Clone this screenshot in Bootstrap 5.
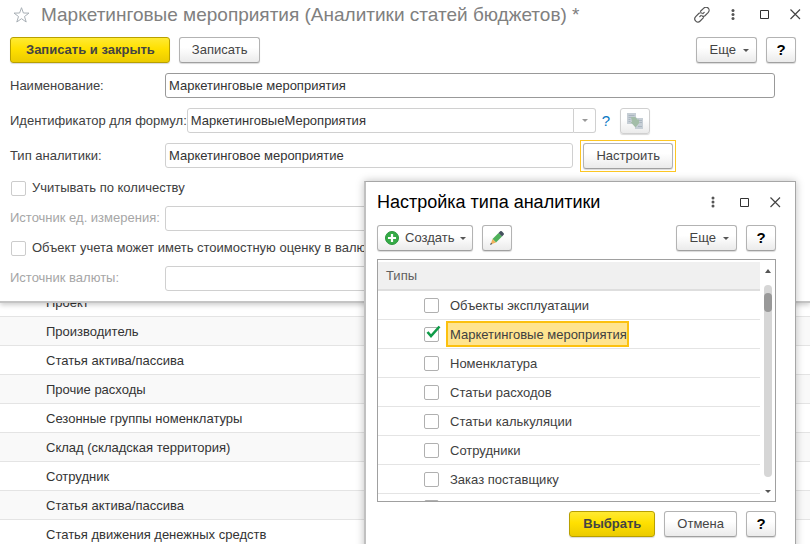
<!DOCTYPE html>
<html lang="ru">
<head>
<meta charset="utf-8">
<meta name="viewport" content="width=device-width, initial-scale=1">
<title>Маркетинговые мероприятия (Аналитики статей бюджетов)</title>
<link href="https://cdn.jsdelivr.net/npm/bootstrap@5.3.0/dist/css/bootstrap.min.css" rel="stylesheet">
<style>
  body { font-family: "Liberation Sans", Arial, sans-serif; font-size: 13px; line-height: 16px; color: #404040; background: #fff; }
  .page { height: 100vh; }
  .form-window { z-index: 1; padding: 0 7px 8px 10px; border-bottom: 2px solid #c4c4c4; box-shadow: 0 2px 5px rgba(0,0,0,.2); }
  .title-bar { height: 30px; padding-left: 3px; }
  .title-text { font-size: 19px; line-height: 22px; color: #808080; white-space: nowrap; }
  .dialog-title { font-size: 18px; line-height: 22px; color: #000; }
  .win-icon { width: 16px; height: 16px; border: 0; padding: 0; background: none; display: block; }
  .win-icons { gap: 15px; }
  .win-icon svg, .btn svg { display: block; }
  .btn-line { gap: 9px; }
  .tool-bar { margin: 7px 7px 5px 0; }
  .btn { --bs-btn-font-size: 13px; --bs-btn-line-height: 16px; --bs-btn-padding-y: 4px; --bs-btn-padding-x: 12px; --bs-btn-border-radius: 3px; height: 26px; white-space: nowrap; }
  .btn-plain { --bs-btn-color: #444; --bs-btn-hover-color: #222; --bs-btn-border-color: #b3b3b3; --bs-btn-hover-border-color: #999; border-bottom-color: #a0a0a0; background: linear-gradient(#fff 40%, #ebebeb); box-shadow: 0 1px 1px rgba(0,0,0,.15); }
  .btn-main { --bs-btn-padding-x: 13px; --bs-btn-color: #444; --bs-btn-hover-color: #222; --bs-btn-border-color: #b8a000; --bs-btn-hover-border-color: #998500; background: linear-gradient(#ffea33, #ffe000 45%, #ebcb00); font-weight: bold; box-shadow: 0 1px 1px rgba(0,0,0,.15); }
  .btn-save { padding-left: 15px; padding-right: 14px; }
  .btn-more { display: flex; align-items: center; gap: 7px; padding-left: 13px; padding-right: 7px; }
  .btn-create { display: flex; align-items: center; gap: 6px; padding-left: 7px; padding-right: 6px; }
  .btn-square { width: 30px; padding: 0; display: flex; align-items: center; justify-content: center; }
  .btn-help { color: #000; font-size: 15px; font-weight: bold; }
  .btn-faded { border-color: #d0d0d0; }
  .caret { display: inline-block; border: 3px solid transparent; border-top-color: #555; border-bottom: 0; }
  .caret-up { border-top: 0; border-bottom: 4px solid #555; }
  .line-tall { height: 35px; padding-right: 28px; }
  .line-low { height: 30px; padding-right: 28px; }
  .cap { width: 155px; flex: none; white-space: nowrap; }
  .cap-auto { white-space: nowrap; }
  .cap-off { color: #a6a6a6; }
  .field { height: 25px; min-width: 0; padding: 0 3px; font-size: 13px; color: #333; border: 1px solid #d0d0d0; border-radius: 3px; box-shadow: none; background: #fff; }
  .field:disabled { background: #fff; }
  .field-active { border-color: #999; }
  .drop { width: 22px; height: 25px; padding: 0; border: 1px solid #d0d0d0; border-left: 0; border-radius: 0 3px 3px 0; background: #fff; display: flex; align-items: center; justify-content: center; }
  .drop .caret { border-top-color: #999; }
  .hint { width: 24px; text-align: center; color: #0a79c4; font-size: 15px; text-decoration: none; padding-right: 4px; }
  .focus-frame { border: 1px solid #fcc624; padding: 2px; margin-left: 7px; margin-right: 99px; }
  .tail-copy { margin-right: 125px; }
  .tail-field { margin-right: 201px; }
  .tick { width: 15px; height: 15px; margin: 0; flex: none; border: 1px solid #b0b0b0; float: none; }
  .form-check-input.tick[type=checkbox] { border-radius: 2px; box-shadow: none; }
  .tick-line { padding-left: 1px; gap: 6px; }
  .tick-line .tick { border-color: #ccc; }
  .tick-line label { white-space: nowrap; }
  .back-list, .types-table { border-collapse: separate; border-spacing: 0; }
  .back-list { margin-top: -15px; margin-bottom: 0; }
  .back-list td { height: 29px; padding: 2px 0 0 46px; border-bottom: 1px solid #e4e4e4; color: #333; vertical-align: middle; }
  .back-list tr:nth-child(even) td { background: #f9f9f9; }
  .dialog-window { position: absolute; z-index: 2; left: 364px; right: 14px; top: 181px; padding: 0 12px 20px 11px; border: 1px solid #a6a6a6; border-left: 2px solid #c0c0c0; background: #fff; box-shadow: 0 0 8px rgba(0,0,0,.25); }
  .dialog-head { height: 43px; padding-bottom: 3px; }
  .dialog-body { margin-right: 7px; }
  .types-box { height: 243px; margin-top: 8px; border: 1px solid #a0a0a0; padding-top: 2px; }
  .types-table { margin: 0; }
  .types-table th { height: 29px; padding: 0 0 0 8px; font-weight: normal; color: #606060; background: #f0f0f0; border-bottom: 2px solid #dedede; vertical-align: middle; }
  .types-table td { height: 29px; padding: 0 0 0 46px; border-bottom: 1px solid #e4e4e4; vertical-align: middle; }
  .type-name { height: 26px; padding: 4px 0 2px 2px; border: 2px solid transparent; color: #404040; }
  .type-picked { background: #ffe48f; border-color: #fcc10f; }
  .form-check-input.tick-done:checked { background-color: #fff; border-color: #b0b0b0; background-image: none; }
  .tick-wrap { position: relative; display: flex; margin-right: 7px; }
  .tick-wrap svg { position: absolute; left: 2px; top: -2px; pointer-events: none; }
  .types-table tr:last-child td { vertical-align: top; padding-top: 6px; }
  .scroll-col { width: 15px; flex: none; padding: 7px 0 8px; }
  .scroll-track { width: 8px; flex: 1; margin: 12px 0 13px; padding-top: 8px; border-radius: 4px; background: #d6d6d6; }
  .scroll-thumb { height: 19px; border-radius: 4px; background: #999; }
  .dialog-foot { margin-top: 9px; }
</style>
<script src="https://cdn.jsdelivr.net/npm/bootstrap@5.3.0/dist/js/bootstrap.bundle.min.js"></script>
</head>
<body>
<div class="page position-relative overflow-hidden">
  <main class="form-window position-relative bg-white">
    <header class="title-bar d-flex align-items-center">
      <button class="win-icon me-2" type="button" aria-label="В избранное">
        <svg width="18" height="17" viewBox="0 0 18 17" fill="none" stroke="#a9b0b6" stroke-width="1"><path d="M8.500 .700 10.400 6 16 6.100 11.500 9.500 13.200 15 8.500 11.700 3.800 15 5.500 9.500 1 6.100 6.600 6Z"/></svg>
      </button>
      <h1 class="title-text m-0 ms-1 fw-normal flex-grow-1">Маркетинговые мероприятия (Аналитики статей бюджетов) *</h1>
      <div class="win-icons d-flex">
        <button class="win-icon" type="button" aria-label="Ссылка">
          <svg width="16" height="16" viewBox="0 0 16 16" fill="none" stroke="#555" stroke-width="1.200" stroke-linecap="round"><path d="M6.500 4.300 9.800 1.200A2.900 2.900 0 0 1 14.300 5.300L11 8.700Q9.600 9.800 8.200 8.900M9.500 10.700 6.200 14A2.900 2.900 0 0 1 1.700 9.700L5 6.300Q6.400 5.300 7.800 6.100M5.800 9.700 7.100 8.400M8.900 6.600 10.200 5.300"/></svg>
        </button>
        <button class="win-icon" type="button" aria-label="Меню">
          <svg width="16" height="16" viewBox="0 0 16 16" fill="#555"><circle cx="8" cy="3.500" r="1.500"/><circle cx="8" cy="7.500" r="1.500"/><circle cx="8" cy="11.500" r="1.500"/></svg>
        </button>
        <button class="win-icon" type="button" aria-label="Развернуть">
          <svg width="16" height="16" viewBox="0 0 16 16" fill="none" stroke="#333"><path d="M4.500 3.500h8v8h-8z"/></svg>
        </button>
        <button class="win-icon" type="button" aria-label="Закрыть">
          <svg width="16" height="16" viewBox="0 0 16 16" fill="none" stroke="#444" stroke-width="1.200"><path d="M3.500 2.500l9.500 9.500M13 2.500 3.500 12"/></svg>
        </button>
      </div>
    </header>

    <div class="tool-bar btn-line d-flex align-items-center">
      <button class="btn btn-main btn-save" type="button">Записать и закрыть</button>
      <button class="btn btn-plain" type="button">Записать</button>
      <button class="btn btn-plain btn-more ms-auto" type="button">Еще <span class="caret"></span></button>
      <button class="btn btn-plain btn-square btn-help" type="button">?</button>
    </div>

    <div class="line-tall d-flex align-items-center">
      <label class="cap" for="f-name">Наименование:</label>
      <input class="field field-active flex-grow-1" id="f-name" type="text" value="Маркетинговые мероприятия">
    </div>
    <div class="line-tall d-flex align-items-center">
      <label class="cap-auto" for="f-ident">Идентификатор для формул:</label>
      <input class="field flex-grow-1 rounded-end-0" id="f-ident" type="text" value="МаркетинговыеМероприятия">
      <button class="drop" type="button" aria-label="Выбрать"><span class="caret"></span></button>
      <a class="hint" href="#">?</a>
      <button class="btn btn-plain btn-square btn-faded tail-copy" type="button" aria-label="Заполнить">
        <svg width="18" height="18" viewBox="0 0 18 18"><path fill="#c6ced5" d="M1 1h9v11H1z"/><path fill="#c6ced5" d="M9 6h8v11H9z"/><path stroke="#aab6c0" fill="none" d="M2.500 3.500h6M2.500 5.500h3M2.500 7.500h2M2.500 9.500h2M13 8.500h3M14 10.500h2M12 14.500h4"/><path fill="#a3bda8" d="M5 5h4q2 0 2 2.500h2V10h1l-4.500 5.500L4.500 10H6z"/></svg>
      </button>
    </div>
    <div class="line-tall d-flex align-items-center">
      <label class="cap" for="f-type">Тип аналитики:</label>
      <input class="field flex-grow-1" id="f-type" type="text" value="Маркетинговое мероприятие">
      <div class="focus-frame"><button class="btn btn-plain" type="button">Настроить</button></div>
    </div>
    <div class="line-low tick-line d-flex align-items-center">
      <input class="form-check-input tick" id="c-qty" type="checkbox"><label for="c-qty">Учитывать по количеству</label>
    </div>
    <div class="line-low d-flex align-items-center">
      <label class="cap cap-off" for="f-unit">Источник ед. измерения:</label>
      <input class="field flex-grow-1 tail-field" id="f-unit" type="text" disabled>
    </div>
    <div class="line-low tick-line d-flex align-items-center">
      <input class="form-check-input tick" id="c-cur" type="checkbox"><label for="c-cur">Объект учета может иметь стоимостную оценку в валюте</label>
    </div>
    <div class="line-low d-flex align-items-center">
      <label class="cap cap-off" for="f-cur">Источник валюты:</label>
      <input class="field flex-grow-1 tail-field" id="f-cur" type="text" disabled>
    </div>
  </main>

  <table class="back-list table table-borderless">
    <tbody>
      <tr><td>Проект</td></tr>
      <tr><td>Производитель</td></tr>
      <tr><td>Статья актива/пассива</td></tr>
      <tr><td>Прочие расходы</td></tr>
      <tr><td>Сезонные группы номенклатуры</td></tr>
      <tr><td>Склад (складская территория)</td></tr>
      <tr><td>Сотрудник</td></tr>
      <tr><td>Статья актива/пассива</td></tr>
      <tr><td>Статья движения денежных средств</td></tr>
    </tbody>
  </table>

  <section class="dialog-window" role="dialog" aria-labelledby="dlg-title">
    <header class="dialog-head d-flex align-items-center">
      <h2 class="dialog-title m-0 fw-normal flex-grow-1" id="dlg-title">Настройка типа аналитики</h2>
      <div class="win-icons d-flex">
        <button class="win-icon" type="button" aria-label="Меню">
          <svg width="16" height="16" viewBox="0 0 16 16" fill="#555"><circle cx="8" cy="4" r="1.500"/><circle cx="8" cy="8" r="1.500"/><circle cx="8" cy="12" r="1.500"/></svg>
        </button>
        <button class="win-icon" type="button" aria-label="Развернуть">
          <svg width="16" height="16" viewBox="0 0 16 16" fill="none" stroke="#333"><path d="M4.500 4.500h8v8h-8z"/></svg>
        </button>
        <button class="win-icon" type="button" aria-label="Закрыть">
          <svg width="16" height="16" viewBox="0 0 16 16" fill="none" stroke="#444" stroke-width="1.200"><path d="M3.500 3.500l9.500 9.500M13 3.500 3.500 13"/></svg>
        </button>
      </div>
    </header>
    <div class="dialog-body">
      <div class="btn-line d-flex">
        <button class="btn btn-plain btn-create" type="button">
          <svg width="14" height="14" viewBox="0 0 15 15"><circle cx="7.500" cy="7.500" r="7" fill="#35ab47" stroke="#2a933b"/><path d="M7.500 3.200v8.600M3.200 7.500h8.600" stroke="#fff" stroke-width="2.400"/></svg>
          Создать <span class="caret"></span>
        </button>
        <button class="btn btn-plain btn-square" type="button" aria-label="Изменить">
          <svg width="16" height="16" viewBox="0 0 16 16"><path fill="#4fb15a" d="M3.500 9 9.500 3 13 6.500 7 12.500z"/><path fill="#44515e" d="M9.500 3 11.200 1.300Q12 .600 12.800 1.300L14.700 3.200q.600.800 0 1.500L13 6.500z"/><path fill="#f0b05a" d="M3.500 9 7 12.500 1.500 14.500z"/><path fill="#44515e" d="M2 12.700 3.300 14 1 15z"/></svg>
        </button>
        <button class="btn btn-plain btn-more ms-auto" type="button">Еще <span class="caret"></span></button>
        <button class="btn btn-plain btn-square btn-help" type="button">?</button>
      </div>
      <div class="types-box d-flex overflow-hidden">
        <div class="flex-grow-1">
          <table class="types-table table table-borderless">
            <thead><tr><th scope="col">Типы</th></tr></thead>
            <tbody>
              <tr><td><div class="d-flex align-items-center"><span class="tick-wrap"><input class="form-check-input tick" id="t1" type="checkbox"></span><label class="type-name" for="t1">Объекты эксплуатации</label></div></td></tr>
              <tr><td><div class="d-flex align-items-center"><span class="tick-wrap"><input class="form-check-input tick tick-done" id="t2" type="checkbox" checked><svg width="15" height="14" viewBox="0 0 15 14" fill="none" stroke="#0f9b48" stroke-width="2.600"><path d="M1.500 7 5 11 13.500 1.500"/></svg></span><label class="type-name type-picked" for="t2">Маркетинговые мероприятия</label></div></td></tr>
              <tr><td><div class="d-flex align-items-center"><span class="tick-wrap"><input class="form-check-input tick" id="t3" type="checkbox"></span><label class="type-name" for="t3">Номенклатура</label></div></td></tr>
              <tr><td><div class="d-flex align-items-center"><span class="tick-wrap"><input class="form-check-input tick" id="t4" type="checkbox"></span><label class="type-name" for="t4">Статьи расходов</label></div></td></tr>
              <tr><td><div class="d-flex align-items-center"><span class="tick-wrap"><input class="form-check-input tick" id="t5" type="checkbox"></span><label class="type-name" for="t5">Статьи калькуляции</label></div></td></tr>
              <tr><td><div class="d-flex align-items-center"><span class="tick-wrap"><input class="form-check-input tick" id="t6" type="checkbox"></span><label class="type-name" for="t6">Сотрудники</label></div></td></tr>
              <tr><td><div class="d-flex align-items-center"><span class="tick-wrap"><input class="form-check-input tick" id="t7" type="checkbox"></span><label class="type-name" for="t7">Заказ поставщику</label></div></td></tr>
              <tr><td><div class="d-flex align-items-center"><span class="tick-wrap"><input class="form-check-input tick" id="t8" type="checkbox" aria-label="Следующий тип"></span></div></td></tr>
            </tbody>
          </table>
        </div>
        <div class="scroll-col d-flex flex-column align-items-center">
          <span class="caret caret-up"></span>
          <div class="scroll-track"><div class="scroll-thumb"></div></div>
          <span class="caret"></span>
        </div>
      </div>
      <footer class="dialog-foot btn-line d-flex justify-content-end">
        <button class="btn btn-main" type="button">Выбрать</button>
        <button class="btn btn-plain" type="button">Отмена</button>
        <button class="btn btn-plain btn-square btn-help" type="button">?</button>
      </footer>
    </div>
  </section>
</div>
</body>
</html>
